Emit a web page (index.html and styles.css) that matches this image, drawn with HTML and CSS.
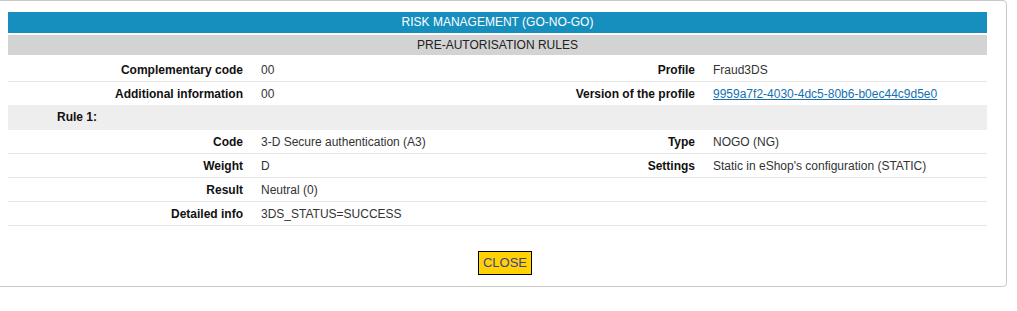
FILE: index.html
```html
<!DOCTYPE html>
<html>
<head>
<meta charset="utf-8">
<link rel="stylesheet" href="styles.css">
</head>
<body>
<div class="modal">
  <div class="bar-main">RISK MANAGEMENT (GO-NO-GO)</div>
  <div class="bar-sub">PRE-AUTORISATION RULES</div>
  <div class="grid first">
    <div class="lbl">Complementary code</div><div class="val">00</div>
    <div class="lbl">Profile</div><div class="val">Fraud3DS</div>
    <div class="lbl">Additional information</div><div class="val">00</div>
    <div class="lbl">Version of the profile</div><div class="val"><a href="#">9959a7f2-4030-4dc5-80b6-b0ec44c9d5e0</a></div>
  </div>
  <div class="rule">Rule 1:</div>
  <div class="grid">
    <div class="lbl">Code</div><div class="val">3-D Secure authentication (A3)</div>
    <div class="lbl">Type</div><div class="val">NOGO (NG)</div>
    <div class="lbl">Weight</div><div class="val">D</div>
    <div class="lbl">Settings</div><div class="val">Static in eShop's configuration (STATIC)</div>
    <div class="lbl">Result</div><div class="val">Neutral (0)</div>
    <div class="lbl"></div><div class="val"></div>
    <div class="lbl">Detailed info</div><div class="val">3DS_STATUS=SUCCESS</div>
    <div class="lbl"></div><div class="val"></div>
  </div>
  <div class="actions"><button class="close">CLOSE</button></div>
</div>
</body>
</html>
```
FILE: styles.css
```css
html, body {
  margin: 0;
  padding: 0;
  background: #fff;
}
body {
  font-family: "Liberation Sans", Arial, sans-serif;
  font-size: 12px;
  color: #333;
}
.modal {
  box-sizing: border-box;
  margin-left: -1px;
  width: 1008px;
  border: 1px solid #c8c8c8;
  border-radius: 0 4px 4px 0;
  padding: 11px 19px 11px 8px;
  background: #fff;
}
.bar-main {
  background: #168fbf;
  color: #fff;
  text-align: center;
  height: 21px;
  line-height: 21px;
}
.bar-sub {
  margin-top: 2px;
  background: #d3d3d3;
  color: #222;
  text-align: center;
  height: 20px;
  line-height: 21px;
}
.grid {
  display: grid;
  grid-template-columns: 245px 226px 226px 1fr;
}
.grid.first {
  padding-top: 3px;
}
.lbl, .val {
  height: 23px;
  line-height: 25px;
  border-bottom: 1px solid #e8e8e8;
  white-space: nowrap;
}
.lbl {
  text-align: right;
  font-weight: bold;
  color: #111;
  padding-right: 10px;
}
.val {
  padding-left: 8px;
}
.grid.first .lbl:nth-child(5), .grid.first .val:nth-child(6),
.grid.first .lbl:nth-child(7), .grid.first .val:nth-child(8) {
  border-bottom: none;
}
.val a {
  color: #1570b0;
  text-decoration: underline;
}
.rule {
  background: #eeeeee;
  height: 25px;
  line-height: 25px;
  font-weight: bold;
  color: #111;
  padding-left: 49px;
}
.actions {
  display: flex;
  justify-content: center;
  padding-top: 25px;
  padding-left: 15px;
}
.close {
  font-family: "Liberation Sans", Arial, sans-serif;
  font-size: 13px;
  background: #ffd200;
  color: #3b3f9a;
  border: 1px solid #000;
  height: 24px;
  padding: 0 4px;
  margin: 0;
  line-height: 22px;
  border-radius: 0;
}
```
